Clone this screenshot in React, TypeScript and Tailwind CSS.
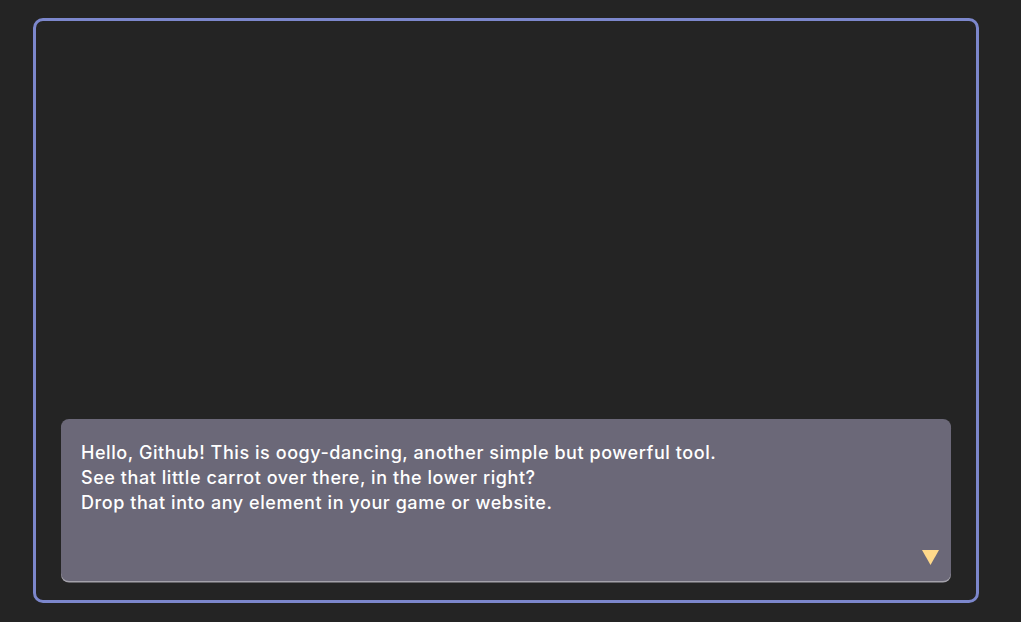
export default function App() {
  return (
    <div className="w-[1021px] h-[622px] bg-[#242424] pl-[33px] pt-[18px]" style={{ fontFamily: 'Inter, "Noto Sans", sans-serif' }}>
      <div className="w-[946px] h-[585px] border-[3px] border-[#7c87cc] rounded-[10px] flex flex-col justify-end px-[25px] pb-[19px]">
        <div className="relative h-[162px] bg-[#6b6878] rounded-[8px] shadow-[0_1.5px_0_#a4a2ab] px-[20px] pt-[21px] text-white text-[18px] leading-[25px] font-medium tracking-[0.56px]">
          <p>Hello, Github! This is oogy-dancing, another simple but powerful tool.</p>
          <p>See that little carrot over there, in the lower right?</p>
          <p>Drop that into any element in your game or website.</p>
          <svg className="absolute right-[12px] bottom-[16px]" width="17" height="15" viewBox="0 0 17 15">
            <polygon points="0,0 17,0 8.5,15" fill="#ffd98a" />
          </svg>
        </div>
      </div>
    </div>
  );
}
